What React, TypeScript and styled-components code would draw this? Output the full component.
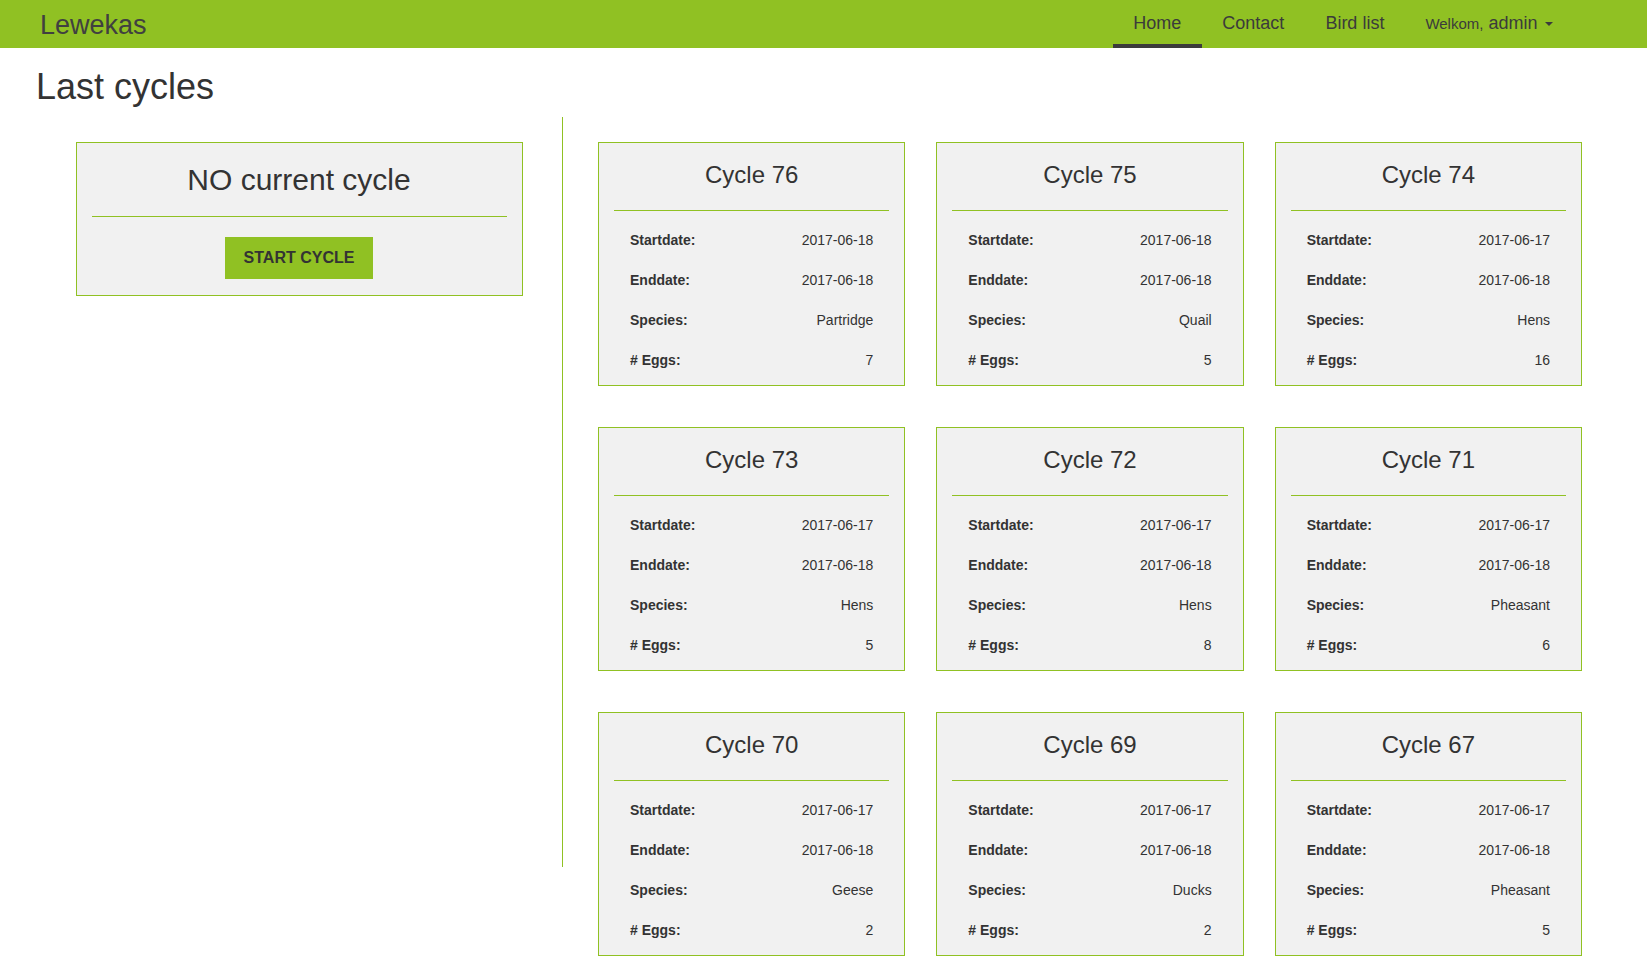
import React from "react";
import styled, { createGlobalStyle } from "styled-components";

const GREEN = "#90c123";
const TEXT = "#333333";
const NAVTEXT = "#3b3b3b";

const GlobalStyle = createGlobalStyle`
  html, body {
    margin: 0;
    padding: 0;
    background: #ffffff;
    font-family: "Liberation Sans", Arial, Helvetica, sans-serif;
    color: ${TEXT};
  }
  * { box-sizing: border-box; }
`;

const Navbar = styled.nav`
  display: flex;
  align-items: stretch;
  height: 48px;
  background: ${GREEN};
`;

const Brand = styled.a`
  padding: 1px 0 0 40px;
  font-size: 27px;
  line-height: 48px;
  color: #404040;
  text-decoration: none;
`;

const NavList = styled.ul`
  display: flex;
  margin: 0 0 0 auto;
  padding: 0 74px 0 0;
  list-style: none;
`;

const NavLink = styled.a<{ $active?: boolean }>`
  display: flex;
  align-items: flex-start;
  height: 48px;
  padding: 13px 20.5px 0;
  font-size: 18px;
  line-height: 20px;
  color: ${NAVTEXT};
  text-decoration: none;
  box-shadow: ${(p) => (p.$active ? `inset 0 -4px 0 ${NAVTEXT}` : "none")};
`;

const Small = styled.span`
  font-size: 15px;
  margin: 1px 5px 0 0;
`;

const Caret = styled.span`
  display: inline-block;
  width: 0;
  height: 0;
  margin: 9px 0 0 7px;
  border-top: 4px solid ${NAVTEXT};
  border-left: 4px solid transparent;
  border-right: 4px solid transparent;
`;

const Main = styled.main`
  padding-left: 36px;
`;

const PageTitle = styled.h1`
  margin: 19px 0 10px;
  font-size: 36px;
  font-weight: 400;
  line-height: 39.6px;
  color: ${TEXT};
`;

const Content = styled.div`
  display: flex;
  align-items: flex-start;
`;

const Sidebar = styled.aside`
  width: 527px;
  height: 750px;
  padding-top: 25px;
  border-right: 1px solid ${GREEN};
`;

const Panel = styled.section`
  width: 447px;
  margin: 0 auto;
  padding: 0 15px 16px;
  background: #f1f1f1;
  border: 1px solid ${GREEN};
  text-align: center;
`;

const PanelTitle = styled.h2`
  margin: 21px 0 0;
  font-size: 30px;
  font-weight: 400;
  line-height: 32px;
  color: ${TEXT};
`;

const Rule = styled.hr<{ $top: number }>`
  margin: ${(p) => p.$top}px 0 0;
  border: 0;
  border-top: 1px solid ${GREEN};
  height: 0;
`;

const StartButton = styled.button`
  display: block;
  margin: 20px auto 0;
  height: 42px;
  padding: 0 19px;
  border: 0;
  background: ${GREEN};
  color: ${TEXT};
  font-family: inherit;
  font-size: 16px;
  font-weight: 700;
  line-height: 42px;
  cursor: pointer;
`;

const Grid = styled.div`
  margin-left: 35px;
  width: 984px;
  padding-top: 25px;
  display: grid;
  grid-template-columns: repeat(3, 1fr);
  column-gap: 31px;
  row-gap: 41px;
`;

const Card = styled.article`
  height: 244px;
  padding: 0 15px;
  background: #f1f1f1;
  border: 1px solid ${GREEN};
`;

const CardTitle = styled.h3`
  margin: 19px 0 0;
  font-size: 24px;
  font-weight: 400;
  line-height: 26px;
  text-align: center;
  color: ${TEXT};
`;

const Rows = styled.dl`
  margin: 9px 0 0;
  padding: 0;
`;

const Row = styled.div`
  display: flex;
  align-items: center;
  justify-content: space-between;
  height: 40px;
  padding: 0 16px;
  font-size: 14px;
  line-height: 20px;
`;

const Label = styled.dt`
  font-weight: 700;
`;

const Value = styled.dd`
  margin: 0;
`;

type Cycle = {
  id: number;
  start: string;
  end: string;
  species: string;
  eggs: number;
};

const cycles: Cycle[] = [
  { id: 76, start: "2017-06-18", end: "2017-06-18", species: "Partridge", eggs: 7 },
  { id: 75, start: "2017-06-18", end: "2017-06-18", species: "Quail", eggs: 5 },
  { id: 74, start: "2017-06-17", end: "2017-06-18", species: "Hens", eggs: 16 },
  { id: 73, start: "2017-06-17", end: "2017-06-18", species: "Hens", eggs: 5 },
  { id: 72, start: "2017-06-17", end: "2017-06-18", species: "Hens", eggs: 8 },
  { id: 71, start: "2017-06-17", end: "2017-06-18", species: "Pheasant", eggs: 6 },
  { id: 70, start: "2017-06-17", end: "2017-06-18", species: "Geese", eggs: 2 },
  { id: 69, start: "2017-06-17", end: "2017-06-18", species: "Ducks", eggs: 2 },
  { id: 67, start: "2017-06-17", end: "2017-06-18", species: "Pheasant", eggs: 5 },
];

export default function App() {
  return (
    <>
      <GlobalStyle />
      <Navbar>
        <Brand href="#">Lewekas</Brand>
        <NavList>
          <li><NavLink href="#" $active>Home</NavLink></li>
          <li><NavLink href="#">Contact</NavLink></li>
          <li><NavLink href="#">Bird list</NavLink></li>
          <li>
            <NavLink href="#">
              <Small>Welkom,</Small>admin<Caret />
            </NavLink>
          </li>
        </NavList>
      </Navbar>
      <Main>
        <PageTitle>Last cycles</PageTitle>
        <Content>
          <Sidebar>
            <Panel>
              <PanelTitle>NO current cycle</PanelTitle>
              <Rule $top={20} />
              <StartButton>START CYCLE</StartButton>
            </Panel>
          </Sidebar>
          <Grid>
            {cycles.map((c) => (
              <Card key={c.id}>
                <CardTitle>Cycle {c.id}</CardTitle>
                <Rule $top={22} />
                <Rows>
                  <Row><Label>Startdate:</Label><Value>{c.start}</Value></Row>
                  <Row><Label>Enddate:</Label><Value>{c.end}</Value></Row>
                  <Row><Label>Species:</Label><Value>{c.species}</Value></Row>
                  <Row><Label># Eggs:</Label><Value>{c.eggs}</Value></Row>
                </Rows>
              </Card>
            ))}
          </Grid>
        </Content>
      </Main>
    </>
  );
}
